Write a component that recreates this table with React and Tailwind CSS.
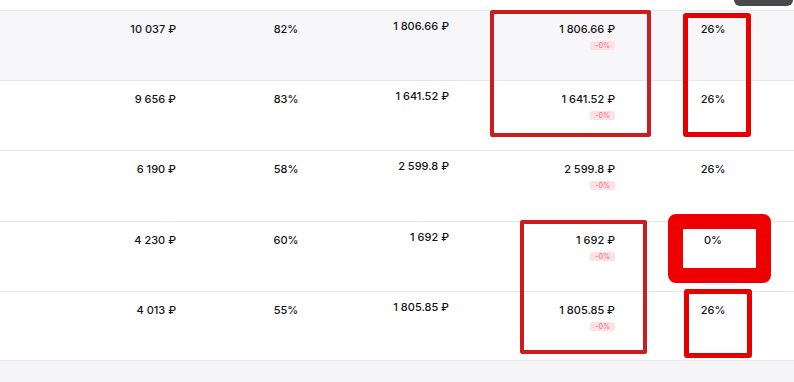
import React from 'react';

const nb = '\u00A0';
const rows = [
  { a: `10${nb}037${nb}₽`, p: '82%', c: `1${nb}806.66${nb}₽`, e: '26%', h: 'h-[70px]' },
  { a: `9${nb}656${nb}₽`, p: '83%', c: `1${nb}641.52${nb}₽`, e: '26%', h: 'h-[70px]' },
  { a: `6${nb}190${nb}₽`, p: '58%', c: `2${nb}599.8${nb}₽`, e: '26%', h: 'h-[71px]' },
  { a: `4${nb}230${nb}₽`, p: '60%', c: `1${nb}692${nb}₽`, e: '0%', h: 'h-[70px]' },
  { a: `4${nb}013${nb}₽`, p: '55%', c: `1${nb}805.85${nb}₽`, e: '26%', h: 'h-[69px]' },
];

const Row = ({ row, i }) => (
  <div className={`flex ${row.h} overflow-hidden border-t border-[#e6e6ea] ${i === 0 ? 'bg-[#f7f7f9]' : 'bg-white'}`}>
    <div className="w-[176px] shrink-0 pt-[10px] text-right whitespace-nowrap">{row.a}</div>
    <div className="w-[220px] shrink-0 pt-[10px] text-center">{row.p}</div>
    <div className="w-[53px] shrink-0 pt-[7px] flex justify-end whitespace-nowrap">{row.c}</div>
    <div className="w-[166px] shrink-0 pt-[10px] flex flex-col items-end whitespace-nowrap">
      <span>{row.c}</span>
      <span className="mt-[4px] px-[5px] rounded-[2px] bg-[#fde1e4] text-[#ec7a88] text-[7px] leading-[9px]">-0%</span>
    </div>
    <div className="w-[196px] shrink-0 pt-[10px] text-center">{row.e}</div>
  </div>
);

export default function App() {
  return (
    <div className="relative w-[794px] h-[382px] overflow-hidden bg-white text-[11px] leading-4 font-medium text-[#141416] font-['Inter','Liberation_Sans',sans-serif]">
      <div className="h-[10px]" />
      {rows.map((row, i) => (
        <Row key={i} row={row} i={i} />
      ))}
      <div className="h-[22px] border-t border-[#ececf0] bg-[#f5f5f7]" />

      {/* top-right dark tab */}
      <div className="absolute left-[734px] top-0 w-[59px] h-[6px] bg-[#4a4a4c] rounded-b-md" />

      {/* annotation boxes */}
      <div className="absolute left-[490px] top-[10px] w-[161px] h-[127px] border-4 border-[#cb1d1d] rounded-[2px]" />
      <div className="absolute left-[683px] top-[13px] w-[68px] h-[124px] border-[5px] border-[#e60000] rounded-[3px]" />
      <div className="absolute left-[668px] top-[214px] w-[103px] h-[69px] border-[15px] border-[#ee0000] rounded-[8px]" />
      <div className="absolute left-[520px] top-[220px] w-[127px] h-[134px] border-4 border-[#cb1d1d] rounded-[2px]" />
      <div className="absolute left-[684px] top-[289px] w-[68px] h-[69px] border-[5px] border-[#e60000] rounded-[3px]" />
    </div>
  );
}
